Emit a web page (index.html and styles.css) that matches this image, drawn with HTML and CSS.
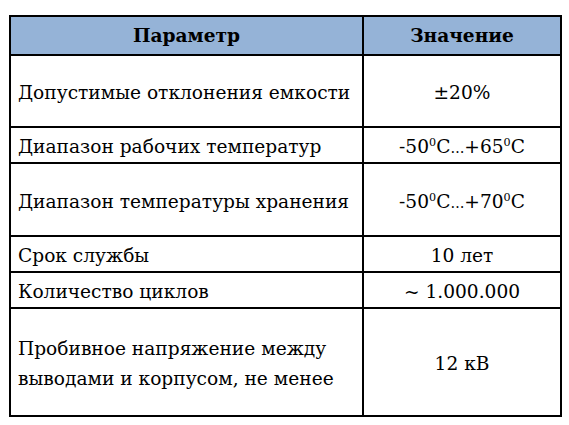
FILE: index.html
```html
<!DOCTYPE html>
<html lang="ru">
<head>
<meta charset="utf-8">
<link rel="stylesheet" href="styles.css">
</head>
<body>
<table class="spec">
  <colgroup><col class="c1"><col class="c2"></colgroup>
  <tr class="head h39"><th>Параметр</th><th>Значение</th></tr>
  <tr class="h72"><td>Допустимые отклонения емкости</td><td class="v">±20%</td></tr>
  <tr class="h36"><td>Диапазон рабочих температур</td><td class="v">-50<sup>0</sup>С<span class="ell">…</span>+65<sup>0</sup>С</td></tr>
  <tr class="h73"><td>Диапазон температуры хранения</td><td class="v">-50<sup>0</sup>С<span class="ell">…</span>+70<sup>0</sup>С</td></tr>
  <tr class="h36"><td>Срок службы</td><td class="v">10 лет</td></tr>
  <tr class="h36"><td>Количество циклов</td><td class="v">~ 1.000.000</td></tr>
  <tr class="h108"><td>Пробивное напряжение между<br>выводами и корпусом, не менее</td><td class="v">12 кВ</td></tr>
</table>
</body>
</html>
```
FILE: styles.css
```css
html, body { margin: 0; padding: 0; background: #fff; }
body { padding: 15px 0 0 9px; }
.spec {
  border-collapse: collapse;
  table-layout: fixed;
  width: 551px;
  font-family: "DejaVu Serif", serif;
  font-size: 18.6px;
  color: #000;
}
.c1 { width: 353px; }
.c2 { width: 198px; }
.spec th, .spec td {
  border: 2px solid #000;
  padding: 0 0 0 7px;
  vertical-align: middle;
  text-align: left;
  line-height: 30px;
}
.spec td { padding-top: 4px; }
.spec td.v { text-align: center; padding: 4px 0 0 0; }
.spec th { text-align: center; padding: 0; }
.head th { background: #95b3d7; font-weight: bold; }
.h39 { height: 39px; }
.h72 { height: 72px; }
.h36 { height: 36px; }
.h73 { height: 73px; }
.h108 { height: 108px; }
.ell { font-size: 0.75em; line-height: 0; }
sup { font-size: 0.6em; line-height: 0; vertical-align: 0.6em; }
```
